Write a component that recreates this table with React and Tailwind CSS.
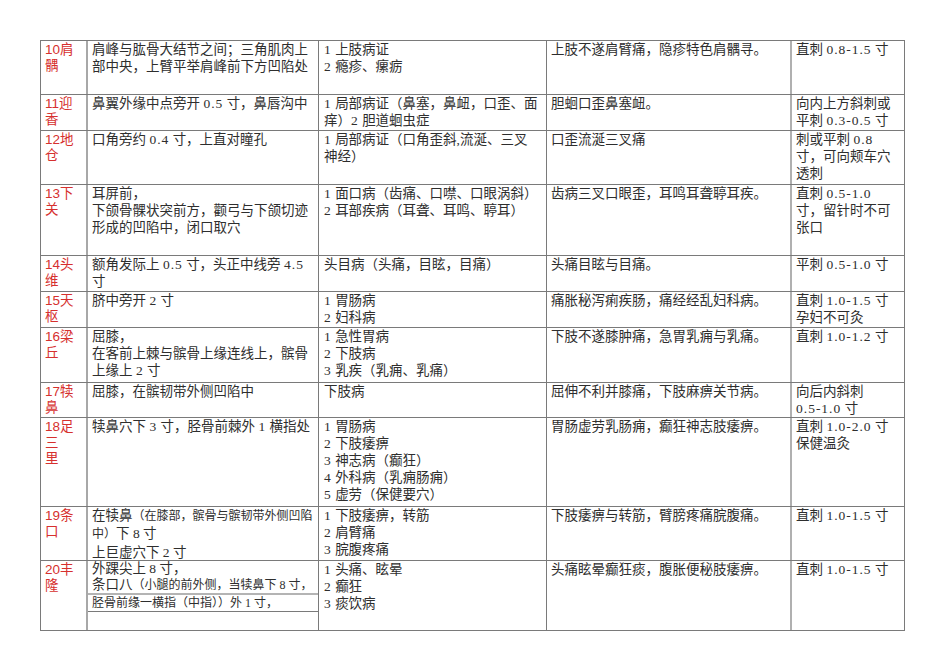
import React from "react";

const rows = [
  {
    h: "h-[54px]",
    label: ["10肩", "髃"],
    c2: ["肩峰与肱骨大结节之间；三角肌肉上", "部中央，上臂平举肩峰前下方凹陷处"],
    c3: ["1 上肢病证", "2 瘾疹、瘰疬"],
    c4: ["上肢不遂肩臂痛，隐疹特色肩髃寻。"],
    c5: ["直刺 0.8-1.5 寸"],
  },
  {
    h: "h-[36px]",
    label: ["11迎", "香"],
    c2: ["鼻翼外缘中点旁开 0.5 寸，鼻唇沟中"],
    c3: ["1 局部病证（鼻塞，鼻衄，口歪、面", "痒）2 胆道蛔虫症"],
    c4: ["胆蛔口歪鼻塞衄。"],
    c5: ["向内上方斜刺或", "平刺 0.3-0.5 寸"],
  },
  {
    h: "h-[54px]",
    label: ["12地", "仓"],
    c2: ["口角旁约 0.4 寸，上直对瞳孔"],
    c3: ["1 局部病证（口角歪斜,流涎、三叉", "神经）"],
    c4: ["口歪流涎三叉痛"],
    c5: ["刺或平刺 0.8", "寸，可向颊车穴", "透刺"],
  },
  {
    h: "h-[71px]",
    label: ["13下", "关"],
    c2: ["耳屏前，", "下颌骨髁状突前方，颧弓与下颌切迹", "形成的凹陷中，闭口取穴"],
    c3: ["1 面口病（齿痛、口噤、口眼涡斜）", "2 耳部疾病（耳聋、耳鸣、聤耳）"],
    c4: ["齿病三叉口眼歪，耳鸣耳聋聤耳疾。"],
    c5: ["直刺 0.5-1.0", "寸，留针时不可", "张口"],
  },
  {
    h: "h-[36px]",
    label: ["14头", "维"],
    c2: ["额角发际上 0.5 寸，头正中线旁 4.5", "寸"],
    c3: ["头目病（头痛，目眩，目痛）"],
    c4: ["头痛目眩与目痛。"],
    c5: ["平刺 0.5-1.0 寸"],
  },
  {
    h: "h-[36px]",
    label: ["15天", "枢"],
    c2: ["脐中旁开 2 寸"],
    c3: ["1 胃肠病", "2 妇科病"],
    c4: ["痛胀秘泻痢疾肠，痛经经乱妇科病。"],
    c5: ["直刺 1.0-1.5 寸", "孕妇不可灸"],
  },
  {
    h: "h-[55px]",
    label: ["16梁", "丘"],
    c2: ["屈膝，", "在客前上棘与髌骨上缘连线上，髌骨", "上缘上 2 寸"],
    c3: ["1 急性胃病", "2 下肢病", "3 乳疾（乳痈、乳痛）"],
    c4: ["下肢不遂膝肿痛，急胃乳痈与乳痛。"],
    c5: ["直刺 1.0-1.2 寸"],
  },
  {
    h: "h-[35px]",
    label: ["17犊", "鼻"],
    c2: ["屈膝，在髌韧带外侧凹陷中"],
    c3: ["下肢病"],
    c4: ["屈伸不利并膝痛，下肢麻痹关节病。"],
    c5: ["向后内斜刺", "0.5-1.0 寸"],
  },
  {
    h: "h-[89px]",
    label: ["18足", "三", "里"],
    c2: ["犊鼻穴下 3 寸，胫骨前棘外 1 横指处"],
    c3: ["1 胃肠病", "2 下肢痿痹", "3 神志病（癫狂）", "4 外科病（乳痈肠痈）", "5 虚劳（保健要穴）"],
    c4: ["胃肠虚劳乳肠痈，癫狂神志肢痿痹。"],
    c5: ["直刺 1.0-2.0 寸", "保健温灸"],
  },
  {
    h: "h-[54px]",
    label: ["19条", "口"],
    c2: "r19",
    c3: ["1 下肢痿痹，转筋", "2 肩臂痛", "3 脘腹疼痛"],
    c4: ["下肢痿痹与转筋，臂膀疼痛脘腹痛。"],
    c5: ["直刺 1.0-1.5 寸"],
  },
  {
    h: "h-[70px]",
    label: ["20丰", "隆"],
    c2: "r20",
    c3: ["1 头痛、眩晕", "2 癫狂", "3 痰饮病"],
    c4: ["头痛眩晕癫狂痰，腹胀便秘肢痿痹。"],
    c5: ["直刺 1.0-1.5 寸"],
  },
];

function T({ s }) {
  const parts = s.split(/([0-9.\-]+)/);
  return (
    <>
      {parts.map((p, i) =>
        /^[0-9.\-]+$/.test(p) ? (
          <span key={i} className="tracking-[1px]">
            {p}
          </span>
        ) : (
          <React.Fragment key={i}>{p}</React.Fragment>
        )
      )}
    </>
  );
}

function Lines({ lines }) {
  return (
    <>
      {lines.map((l, i) => (
        <div key={i} className="whitespace-nowrap">
          <T s={l} />
        </div>
      ))}
    </>
  );
}

function Col2({ c2 }) {
  if (c2 === "r19") {
    return (
      <div className="px-[4px] overflow-hidden">
        <div className="whitespace-nowrap">
          在犊鼻<span className="text-[12px]">（在膝部，髌骨与髌韧带外侧凹陷</span>
        </div>
        <div className="whitespace-nowrap">
          <span className="text-[12px]">中）</span>下 8 寸
        </div>
        <div className="whitespace-nowrap leading-[20px]">上巨虚穴下 2 寸</div>
      </div>
    );
  }
  if (c2 === "r20") {
    return (
      <div className="flex flex-col h-full">
        <div className="px-[4px] h-[32px] leading-[16px] overflow-hidden">
          <div className="whitespace-nowrap">外踝尖上 8 寸，</div>
          <div className="whitespace-nowrap">
            条口八<span className="text-[12px]">（小腿的前外侧，当犊鼻下 8 寸，</span>
          </div>
        </div>
        <div className="border-t-2 border-[#b4b4b4] h-[18px] px-[4px] text-[12px] leading-[16px] whitespace-nowrap overflow-hidden">
          胫骨前缘一横指（中指））外 1 寸，
        </div>
        <div className="border-t border-[#7a7a7a] flex-1"></div>
      </div>
    );
  }
  return (
    <div className="px-[4px]">
      <Lines lines={c2} />
    </div>
  );
}

export default function App() {
  return (
    <div className="w-[950px] h-[672px] bg-white pt-[40px] pl-[40px]">
      <div className="w-[865px] border-l border-t border-[#7a7a7a] text-[13.5px] leading-[17px] text-[#2e2e2e] font-['Liberation_Serif','Noto_Sans_CJK_SC',serif]">
        {rows.map((r, i) => (
          <div
            key={i}
            className={`grid grid-cols-[47px_231px_228px_245px_113px] border-b border-[#7a7a7a] ${r.h}`}
          >
            <div className="border-r-2 border-[#a8a8a8] pl-[4px] pt-[1px] text-[#d6302e] text-[13.5px] leading-[16px] overflow-hidden font-['Liberation_Sans','Noto_Sans_CJK_SC',sans-serif]">
              {r.label.map((l, j) => (
                <div key={j} className="whitespace-nowrap">
                  {l}
                </div>
              ))}
            </div>
            <div className="border-r border-[#7a7a7a] overflow-hidden">
              <Col2 c2={r.c2} />
            </div>
            <div className="border-r border-[#7a7a7a] pl-[5px] overflow-hidden">
              <Lines lines={r.c3} />
            </div>
            <div className="border-r-2 border-[#b0b0b0] pl-[4px] overflow-hidden">
              <Lines lines={r.c4} />
            </div>
            <div className="border-r border-[#7a7a7a] pl-[4px] overflow-hidden">
              <Lines lines={r.c5} />
            </div>
          </div>
        ))}
      </div>
    </div>
  );
}
